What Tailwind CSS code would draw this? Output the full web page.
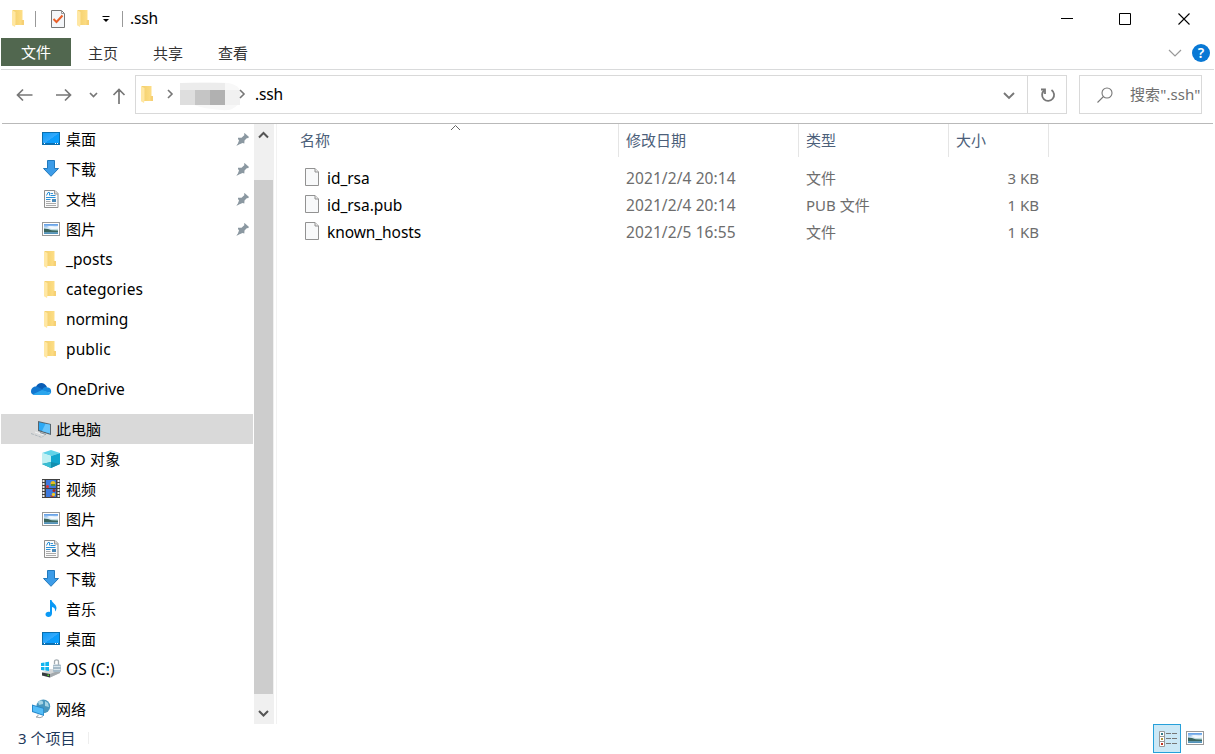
<!DOCTYPE html>
<html lang="zh-CN">
<head>
<meta charset="utf-8">
<title>.ssh</title>
<script src="https://cdn.jsdelivr.net/npm/@tailwindcss/browser@4"></script>
</head>
<body class="w-[1215px] h-[754px] overflow-hidden bg-white text-black text-[15px] font-['Noto_Sans','Noto_Sans_CJK_SC',sans-serif]">
<svg class="absolute w-0 h-0">
  <defs>
    <linearGradient id="fold" x1="0" x2="1"><stop offset="0" stop-color="#f3cf6b"/><stop offset="1" stop-color="#ffe08a"/></linearGradient>
    <linearGradient id="sky" x1="0" y1="0" x2="0" y2="1"><stop offset="0" stop-color="#5c9be6"/><stop offset=".5" stop-color="#e4f3fa"/><stop offset=".65" stop-color="#7aa8a4"/><stop offset="1" stop-color="#4d8fc0"/></linearGradient>
    <linearGradient id="blue" x1="0" y1="0" x2="1" y2="1"><stop offset="0" stop-color="#0b9bf8"/><stop offset=".5" stop-color="#35a9fb"/><stop offset=".52" stop-color="#0c9cfb"/><stop offset="1" stop-color="#0ba0ff"/></linearGradient>
  </defs>
  <symbol id="folder" viewBox="0 0 20 20"><path d="M3.500 1H13.500V11H15V16H5z" fill="url(#fold)"/><path d="M12.500 11H15V16H12.500z" fill="#f6d075"/><path d="M3 1.200L6.500 3V15L6 18L3 16.200z" fill="#ffe7a3"/></symbol>
  <symbol id="desktop" viewBox="0 0 20 20"><rect x="1.500" y="3.500" width="17" height="12" fill="url(#blue)" stroke="#0a6fae"/><path d="M2 14.500H18" stroke="#0a6fb5"/><path d="M3 14.500H4M14 14.500H15M16 14.500H17" stroke="#fff"/></symbol>
  <symbol id="download" viewBox="0 0 20 20"><path d="M6.500 1.500H13.500V9.500H17.500L10 17.300L2.500 9.500H6.500z" fill="#3c9ce8" stroke="#2179bd"/></symbol>
  <symbol id="doc" viewBox="0 0 20 20"><path d="M3.500 1.500H14L17 4.500V18.500H3.500z" fill="#fbfbfb" stroke="#8f8f8f"/><path d="M13.500 1.500V5H17" fill="#ddd" stroke="#9a9a9a"/><path d="M5.500 6.500L7 3.500H8.500V6.500M9.500 4.500H12M9.500 6.500H14.500" fill="none" stroke="#2b91d8"/><path d="M5 8.500H14.500M5 10.500H9.500" stroke="#2b91d8"/><path d="M5 12.500H9.500M5 14.500H15M5 16.500H15" stroke="#aaa"/><rect x="11" y="10" width="4" height="3" fill="#4a8ab9"/></symbol>
  <symbol id="picture" viewBox="0 0 20 20"><rect x="1.500" y="3.500" width="17" height="13" fill="#fff" stroke="#999"/><rect x="3" y="5" width="14" height="10" fill="url(#sky)"/><path d="M3 9.500L7 10L11 11.500L17 12V13H3z" fill="#3b655f"/><path d="M6 8C9 6 11 8 17 7V9.500L11 10z" fill="#fff" opacity=".8"/></symbol>
  <symbol id="pin" viewBox="0 0 14 14"><path d="M8.500 1L13 5L12 6.200L11 6L8.500 8.500L8.300 11.500L6.500 11L1.200 13.300L3 8.500L2 7V5.800H5.500L8.500 3L8 2z" fill="#8b98a1"/><path d="M1 13.500L5.500 8.500" stroke="#8b98a1"/></symbol>
  <symbol id="cloud" viewBox="0 0 22 20"><path d="M6 8C7.500 3.500 14 2 17 8L13 12L4 11z" fill="#0a5db5"/><path d="M1 12.500C1 8.500 4.500 7 7 7.600L14 11L5 16C2.500 16 1 14.500 1 12.500z" fill="#1276cf"/><path d="M12.500 10C13.500 8 16 7.300 18 8.600C21 9 21.500 12 21 14L12 12z" fill="#1689dd"/><path d="M3 15.300L12 11L20.800 14C20 15.500 19 16 18 16H5C4 16 3.500 15.700 3 15.300z" fill="#2aa5ed"/></symbol>
  <symbol id="pc" viewBox="0 0 22 20"><path d="M8 2L21 5V16L8 12z" fill="#57646d"/><path d="M9 3.300L20 5.800V14.400L9 11z" fill="#2ca9f5"/><path d="M15.500 4.800L20 5.800V14.400L12 12z" fill="#67c4fb"/><path d="M1 14.500L12 18.500L15 15.500" fill="none" stroke="#aeb7bd" stroke-dasharray="3 1"/><path d="M5 13L14 16" stroke="#eef1f3"/><path d="M10 13.500L16 15.500" stroke="#87949c"/></symbol>
  <symbol id="cube" viewBox="0 0 20 20"><path d="M1 4L10 1L19 4L10 7z" fill="#61d3e8"/><path d="M1 4L10 7V19L1 15z" fill="#bff0f3"/><path d="M19 4L10 7V19L19 15z" fill="#12a6ce"/><path d="M10 13L19 15L10 19L1 15z" fill="#148fae"/><path d="M1 15L10 13V19z" fill="#38bdd2"/></symbol>
  <symbol id="video" viewBox="0 0 20 20"><rect x="1" y="0" width="18" height="19" fill="#414141"/><path d="M2.500 1V19M17.500 1V19" stroke="#eee" stroke-width="2" stroke-dasharray="2 1"/><path d="M5 1H15V9H5zM5 10H15V18H5z" fill="#3c79de"/><circle cx="12" cy="4.500" r="2.500" fill="#e9bd21"/><path d="M10 5H14V7H10z" fill="#578f2c"/><circle cx="6.500" cy="7.500" r="1.500" fill="#df3131"/><circle cx="13" cy="11.500" r="1.500" fill="#a62828"/><circle cx="12.500" cy="15.500" r="1.700" fill="#f0c928"/><path d="M9 16L14 18H10z" fill="#c84428"/></symbol>
  <symbol id="music" viewBox="0 0 20 20"><path d="M9 1H10.500C11 4 15.500 5 15.500 9C15.500 10.500 14.500 12 14 12.500C14.500 9.500 13 8.500 11 8V14.500C11 19 4.500 19 4.500 15.500C4.500 13 7 12.300 9 13z" fill="#0a99f5"/></symbol>
  <symbol id="drive" viewBox="0 0 20 20"><path d="M1 13.500L9 10L19 10.500V14L9 18.500L1 16.500z" fill="#d3d6d8"/><path d="M1 13.500L9 15V18.500L1 16.500z" fill="#343b3e"/><path d="M9 15L19 11V14L9 18.500z" fill="#a3a9ad"/><path d="M6.500 15.500H8V17H6.500z" fill="#55d32b"/><path d="M0 4L3.500 3.500V7H0zM4.300 3.300L8 2.800V7H4.300zM0 8H3.500V11.500L0 11zM4.300 8H8V12L4.300 11.500z" fill="#12b5ef"/><path d="M13.500 5V2.500C13.500 .2 17.500 .2 17.500 2.500V6" fill="none" stroke="#a4acb1" stroke-width="1.300"/><rect x="12" y="5.500" width="8" height="7.500" rx="1" fill="#a5bac8"/><path d="M12.500 7.500H19.500M12.500 10.500H19.500" stroke="#dbe6ec"/></symbol>
  <symbol id="net" viewBox="0 0 20 20"><circle cx="12.300" cy="7.300" r="6.900" fill="#4796bd"/><path d="M7 3C10 0 13 2 12 5L8 6zM14 2L17 4L18 8L14 7z" fill="#a5d4e5"/><path d="M1 5.500L13 9V17L1 13z" fill="#2688c9"/><path d="M2 6.800L12.200 9.700V15.800L2 12.300z" fill="#54bdf8"/><path d="M7 15.500V17L5 18L9 18.700L12 17.500" fill="none" stroke="#a1aaaf"/></symbol>
  <symbol id="file" viewBox="0 0 16 20"><path d="M1.500 1.500H11L14.500 5V18.500H1.500z" fill="#f8f9fa" stroke="#929292"/><path d="M11 1.500V5H14.500" fill="#e9e9e9" stroke="#929292"/></symbol>
</svg>

<header class="flex h-[38px] items-center">
  <svg class="ml-[9px] w-5 h-5"><use href="#folder"/></svg>
  <i class="ml-[6px] w-px h-4 bg-[#999]"></i>
  <svg class="ml-[14px] w-4 h-5" viewBox="0 0 16 20"><path d="M1.500 1.500H11.500L14.500 4.500V18.500H1.500z" fill="#f4f6f9" stroke="#777"/><path d="M11.500 1.500V4.500H14.500" fill="none" stroke="#999"/><path d="M3.500 10L6.500 13L12.500 6.500" fill="none" stroke="#e9602a" stroke-width="2"/></svg>
  <svg class="ml-[8px] w-5 h-5"><use href="#folder"/></svg>
  <svg class="ml-[8px] w-[8px] h-[8px]" viewBox="0 0 8 8"><path d="M.500 1.500H7.500" stroke="#000"/><path d="M1 4H7L4 7z"/></svg>
  <i class="ml-[12px] w-px h-4 bg-[#999]"></i>
  <span class="ml-[7px] text-[15.5px] tracking-[-0.2px]">.ssh</span>
  <svg class="ml-auto mr-[18px] w-[136px] h-5" viewBox="0 0 136 20" fill="none" stroke="#000"><path d="M0 9.500H12M58.500 4.500H69.500V15.500H58.500z"/><path d="M117.500 4.500L128.500 15.500M128.500 4.500L117.500 15.500" stroke-width="1.100"/></svg>
</header>

<nav class="flex h-8 items-start border-b border-[#d9dadb] mx-px text-[#333] leading-[30px]">
  <span class="w-[70px] h-7 bg-[#51674f] text-white text-center leading-7">文件</span>
  <span class="ml-[17px]">主页</span><span class="ml-[35px]">共享</span><span class="ml-[35px]">查看</span>
  <svg class="ml-auto mt-[10px] w-[14px] h-[10px]" viewBox="0 0 14 10"><path d="M1 2L7 8L13 2" fill="none" stroke="#999" stroke-width="1.200"/></svg>
  <svg class="ml-[10px] mr-[4px] mt-[6px] w-[18px] h-[18px]" viewBox="0 0 18 18"><circle cx="9" cy="9" r="9" fill="#0878d5"/><text x="9" y="14" text-anchor="middle" font-size="14" font-weight="600" fill="#fff">?</text></svg>
</nav>

<div class="flex h-[54px] border-b border-[#b9b9b9] mx-[2px] pt-[5px]">
  <svg class="w-[133px] h-[39px]" viewBox="2 75 133 39" fill="none" stroke="#777" stroke-width="1.700"><path d="M32.500 95H17.500M23 89.500L17.500 95L23 100.500M56 95H70.500M65 89.500L70.500 95L65 100.500M119 104V89.500M113.500 95L119 89.500L124.500 95"/><path d="M90 93L93.500 96.500L97 93"/></svg>
  <div class="flex w-[932px] h-[39px] border border-[#d9d9d9] items-center">
    <svg class="ml-[2px] w-5 h-5"><use href="#folder"/></svg>
    <svg class="ml-[7px] w-[86px] h-[37px]" viewBox="165 76 86 37"><path d="M181 83Q205 81 228 83Q242 85 241 97Q237 112 222 110Q204 109 194 105H180V92z" fill="#f8f8f8"/><path d="M225 90H240V105H225z" fill="#f1f1f1"/><path d="M180 83H225V90H180z" fill="#ececec"/><path d="M180 90H195V105H180z" fill="#dedede"/><path d="M195 90H210V105H195z" fill="#c5c5c5"/><path d="M210 90H225V105H210z" fill="#b1b1b1"/><path d="M168 90L172 94L168 98M240 90L244 94L240 98" fill="none" stroke="#777" stroke-width="1.600"/></svg>
    <span class="ml-[4px] text-[15.5px] tracking-[-0.2px]">.ssh</span>
    <svg class="ml-auto mr-[12px] w-[12px] h-[10px]" viewBox="0 0 12 10"><path d="M1 3L6 8L11 3" fill="none" stroke="#777" stroke-width="1.900"/></svg>
    <div class="w-[39px] h-full border-l border-[#d9d9d9] flex items-center justify-center pl-[2px]"><svg class="w-4 h-4" viewBox="0 0 16 16" fill="none" stroke="#777" stroke-width="1.800"><path d="M4.300 3.300A6 6 0 1 0 11.500 3"/><path d="M1 2.500H5V7"/></svg></div>
  </div>
  <div class="flex ml-3 w-[123px] h-[39px] border border-[#d9d9d9] items-center text-[#707070]">
    <svg class="ml-[17px] w-4 h-4" viewBox="0 0 16 16" fill="none" stroke="#777" stroke-width="1.100"><circle cx="10" cy="6" r="5"/><path d="M6.500 9.500L.500 15.500"/></svg>
    <span class="ml-[17px] whitespace-nowrap tracking-[0.1px]">搜索".ssh"</span>
  </div>
</div>

<div class="flex h-[600px]">
  <aside class="w-[254px] leading-[30px]">
    <div class="flex items-center h-[30px] pl-[41px] pr-[4px]"><svg class="w-5 h-5"><use href="#desktop"/></svg><span class="ml-[5px]">桌面</span><svg class="ml-auto w-[14px] h-[14px]"><use href="#pin"/></svg></div>
    <div class="flex items-center h-[30px] pl-[41px] pr-[4px]"><svg class="w-5 h-5"><use href="#download"/></svg><span class="ml-[5px]">下载</span><svg class="ml-auto w-[14px] h-[14px]"><use href="#pin"/></svg></div>
    <div class="flex items-center h-[30px] pl-[41px] pr-[4px]"><svg class="w-5 h-5"><use href="#doc"/></svg><span class="ml-[5px]">文档</span><svg class="ml-auto w-[14px] h-[14px]"><use href="#pin"/></svg></div>
    <div class="flex items-center h-[30px] pl-[41px] pr-[4px]"><svg class="w-5 h-5"><use href="#picture"/></svg><span class="ml-[5px]">图片</span><svg class="ml-auto w-[14px] h-[14px]"><use href="#pin"/></svg></div>
    <div class="flex items-center h-[30px] pl-[41px] text-[15.5px] tracking-[0.1px]"><svg class="w-5 h-5 mt-[2px]"><use href="#folder"/></svg><span class="ml-[5px]">_posts</span></div>
    <div class="flex items-center h-[30px] pl-[41px] text-[15.5px] tracking-[0.12px]"><svg class="w-5 h-5 mt-[2px]"><use href="#folder"/></svg><span class="ml-[5px]">categories</span></div>
    <div class="flex items-center h-[30px] pl-[41px] text-[15.5px] tracking-[-0.12px]"><svg class="w-5 h-5 mt-[2px]"><use href="#folder"/></svg><span class="ml-[5px]">norming</span></div>
    <div class="flex items-center h-[30px] pl-[41px] text-[15.5px] tracking-[0.1px]"><svg class="w-5 h-5 mt-[2px]"><use href="#folder"/></svg><span class="ml-[5px]">public</span></div>
    <div class="flex items-center h-[30px] pl-[30px] mt-[10px] text-[15.5px]"><svg class="w-[22px] h-5"><use href="#cloud"/></svg><span class="ml-[4px]">OneDrive</span></div>
    <div class="flex items-center h-[30px] pl-[29px] mt-[10px] ml-px mr-px bg-[#d9d9d9]"><svg class="w-[22px] h-5"><use href="#pc"/></svg><span class="ml-[4px]">此电脑</span></div>
    <div class="flex items-center h-[30px] pl-[41px] tracking-[0.2px]"><svg class="w-5 h-5"><use href="#cube"/></svg><span class="ml-[5px]">3D 对象</span></div>
    <div class="flex items-center h-[30px] pl-[41px]"><svg class="w-5 h-5"><use href="#video"/></svg><span class="ml-[5px]">视频</span></div>
    <div class="flex items-center h-[30px] pl-[41px]"><svg class="w-5 h-5"><use href="#picture"/></svg><span class="ml-[5px]">图片</span></div>
    <div class="flex items-center h-[30px] pl-[41px]"><svg class="w-5 h-5"><use href="#doc"/></svg><span class="ml-[5px]">文档</span></div>
    <div class="flex items-center h-[30px] pl-[41px]"><svg class="w-5 h-5"><use href="#download"/></svg><span class="ml-[5px]">下载</span></div>
    <div class="flex items-center h-[30px] pl-[41px]"><svg class="w-5 h-5"><use href="#music"/></svg><span class="ml-[5px]">音乐</span></div>
    <div class="flex items-center h-[30px] pl-[41px]"><svg class="w-5 h-5"><use href="#desktop"/></svg><span class="ml-[5px]">桌面</span></div>
    <div class="flex items-center h-[30px] pl-[41px] text-[15.5px] tracking-[0.12px]"><svg class="w-5 h-5"><use href="#drive"/></svg><span class="ml-[5px]">OS (C:)</span></div>
    <div class="flex items-center h-[30px] pl-[31px] mt-[10px]"><svg class="w-5 h-5"><use href="#net"/></svg><span class="ml-[5px]">网络</span></div>
  </aside>
  <div class="w-5 bg-[#f0f0f0] flex flex-col">
    <svg class="h-14 w-5" viewBox="0 0 20 56"><path d="M5 13.500L9.500 9L14 13.500" fill="none" stroke="#555" stroke-width="2"/></svg>
    <div class="w-[19px] h-[514px] bg-[#cdcdcd]"></div>
    <svg class="h-[30px] w-5" viewBox="0 0 20 30"><path d="M5 17L9.500 21.500L14 17" fill="none" stroke="#555" stroke-width="2"/></svg>
  </div>
  <i class="ml-[2px] w-px bg-[#f2f2f2]"></i>
  <main class="flex-1">
    <div class="relative flex h-[33px] text-[#4c607a] leading-[33px]">
      <svg class="absolute left-[173px] top-0 w-[11px] h-[7px]" viewBox="0 0 11 7"><path d="M1 6L5.500 1.500L10 6" fill="none" stroke="#666"/></svg>
      <span class="w-[342px] pl-[23px] border-r border-[#e5e5e5]">名称</span>
      <span class="w-[180px] pl-[7px] border-r border-[#e5e5e5]">修改日期</span>
      <span class="w-[150px] pl-[7px] border-r border-[#e5e5e5]">类型</span>
      <span class="w-[100px] pl-[7px] border-r border-[#e5e5e5]">大小</span>
    </div>
    <div class="mt-[7px] text-[#6d6d6d] leading-[29px]">
      <div class="flex h-[27px]"><svg class="ml-[27px] mt-[3px] w-4 h-5"><use href="#file"/></svg><span class="ml-[7px] w-[299px] text-black text-[15.5px] tracking-[-0.05px]">id_rsa</span><span class="w-[180px] text-[15.5px] tracking-[0.1px]">2021/2/4 20:14</span><span class="w-[150px]">文件</span><span class="w-[83px] text-right">3 KB</span></div>
      <div class="flex h-[27px]"><svg class="ml-[27px] mt-[3px] w-4 h-5"><use href="#file"/></svg><span class="ml-[7px] w-[299px] text-black text-[15.5px] tracking-[-0.05px]">id_rsa.pub</span><span class="w-[180px] text-[15.5px] tracking-[0.1px]">2021/2/4 20:14</span><span class="w-[150px]">PUB 文件</span><span class="w-[83px] text-right">1 KB</span></div>
      <div class="flex h-[27px]"><svg class="ml-[27px] mt-[3px] w-4 h-5"><use href="#file"/></svg><span class="ml-[7px] w-[299px] text-black text-[15.5px] tracking-[-0.08px]">known_hosts</span><span class="w-[180px] text-[15.5px] tracking-[0.1px]">2021/2/5 16:55</span><span class="w-[150px]">文件</span><span class="w-[83px] text-right">1 KB</span></div>
    </div>
  </main>
</div>

<footer class="flex h-[30px] pl-[18px] text-[#1e395b] leading-[29px]">
  <span class="w-[70px]">3 个项目</span><i class="w-px h-3 mt-2 bg-[#eee]"></i>
  <div class="ml-auto w-[28px] h-[29px] border border-[#26a0da] bg-[#cbe8f6]">
    <svg class="w-[26px] h-[27px]" viewBox="0 0 26 27"><path d="M5.500 6.500H10.500V21.500H5.500zM5.500 11.500H10.500M5.500 16.500H10.500" fill="#fff" stroke="#999"/><path d="M12 8.500H17M18 8.500H23M12 13.500H17M18 13.500H23M12 18.500H17M18 18.500H23" stroke="#777"/><path d="M7 8H9V10H7z" fill="#347b87"/><path d="M7 13H9V15H7z" fill="#b09740"/><path d="M7 18H9V20H7z" fill="#c43321"/></svg>
  </div>
  <svg class="ml-[4px] mr-[10px] mt-1 w-5 h-5"><use href="#picture"/></svg>
</footer>
</body>
</html>
